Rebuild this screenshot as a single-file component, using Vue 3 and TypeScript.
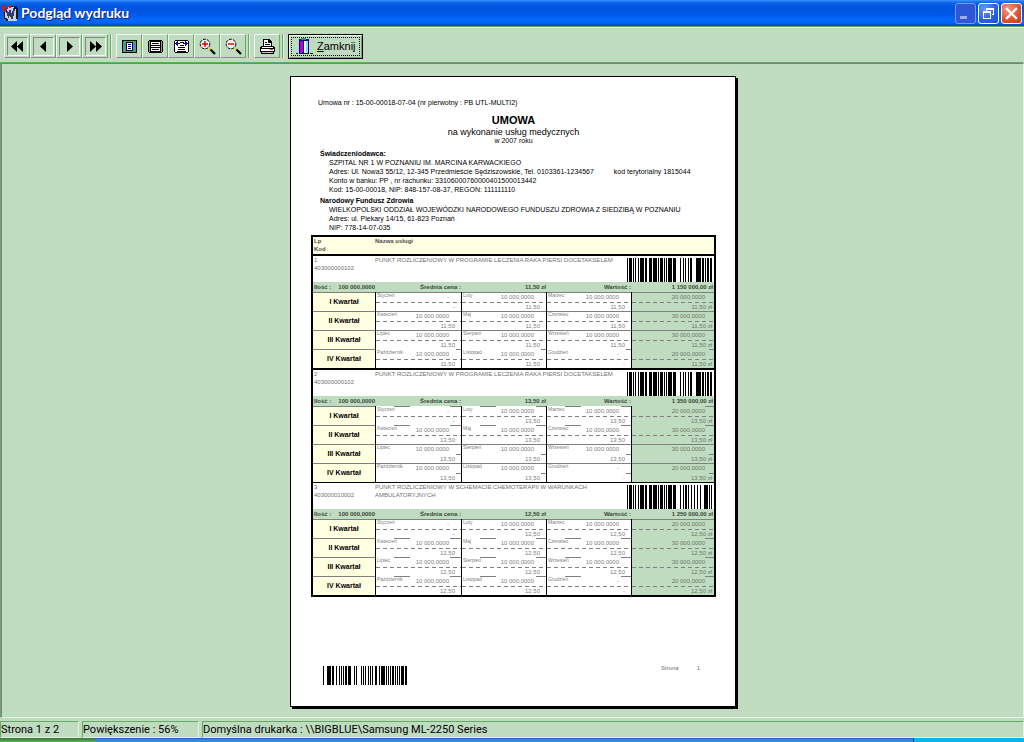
<script setup lang="ts">
type Rule = 'full' | 'part' | 'tail'

interface Month {
  name: string
  qty: string
  price: string
}
interface Quarter {
  label: string
  months: Month[]
  total: string
  rule: Rule
  dash: Rule
}
interface Service {
  no: number
  code: string
  name: string
  price: string
  value: string
  bars: string
  quarters: Quarter[]
}

const labels = ['I Kwartał', 'II Kwartał', 'III Kwartał', 'IV Kwartał']
const monthNames = [
  ['Styczeń', 'Luty', 'Marzec'],
  ['Kwiecień', 'Maj', 'Czerwiec'],
  ['Lipiec', 'Sierpień', 'Wrzesień'],
  ['Październik', 'Listopad', 'Grudzień'],
]
const totals = ['20 000,0000', '30 000,0000', '30 000,0000', '20 000,0000']

function quarters(price: string, rules: Rule[], dashes: Rule[]): Quarter[] {
  return labels.map((label, q) => ({
    label,
    total: totals[q],
    rule: rules[q],
    dash: dashes[q],
    months: monthNames[q].map((name, m) => {
      const empty = (q === 0 && m === 0) || (q === 3 && m === 2)
      return { name, qty: empty ? '-' : '10 000,0000', price: empty ? '-' : price }
    }),
  }))
}

const codeA = '1 1 3 1 1 1 1 2 1 1 4 1 2 2 3 1 4 1 1 1 3 1 1 1 1 1 4 1 3 4 1 2 1 1 1 2 1 1 2 4 5 1 2 1 1 1 2 1 2'
const codeB = '1 1 3 1 1 1 1 2 1 1 4 1 2 2 3 1 4 1 1 1 3 1 1 1 1 1 4 1 3 4 1 2 1 1 2 1 1 2 1 2 1 2 1 2 1 3 4 1 1 1 1'
const codePage = '1 3 4 1 2 2 1 2 1 1 1 1 1 1 2 1 3 3 1 1 1 4 1 1 1 1 1 2 1 1 1 1 1 2 2 2 1 1 4 1 1 1 1 1 1 1 2 1 1 1 1 1 1 1 3 1 2'

const services: Service[] = [
  {
    no: 1,
    code: '403000000102',
    name: 'PUNKT ROZLICZENIOWY W PROGRAMIE LECZENIA RAKA PIERSI DOCETAKSELEM',
    price: '11,50 zł',
    value: '1 150 000,00 zł',
    bars: codeA,
    quarters: quarters('11,50', ['full', 'full', 'full', 'tail'], ['full', 'full', 'full', 'full']),
  },
  {
    no: 2,
    code: '403000000102',
    name: 'PUNKT ROZLICZENIOWY W PROGRAMIE LECZENIA RAKA PIERSI DOCETAKSELEM',
    price: '13,50 zł',
    value: '1 350 000,00 zł',
    bars: codeA,
    quarters: quarters('13,50', ['part', 'part', 'full', 'full'], ['full', 'full', 'tail', 'tail']),
  },
  {
    no: 3,
    code: '403000010002',
    name: 'PUNKT ROZLICZENIOWY W SCHEMACIE CHEMOTERAPII W WARUNKACH AMBULATORYJNYCH',
    price: '12,50 zł',
    value: '1 250 000,00 zł',
    bars: codeB,
    quarters: quarters('12,50', ['full', 'part', 'part', 'part'], ['full', 'full', 'full', 'full']),
  },
]

function bars(code: string): { x: number; w: number }[] {
  const out: { x: number; w: number }[] = []
  let x = 0
  code.split(' ').forEach((run, i) => {
    const w = Number(run)
    if (i % 2 === 0) out.push({ x, w })
    x += w
  })
  return out
}
</script>

<template>
  <div class="window">
    <header class="titlebar">
      <svg class="app-icon" width="16" height="16" viewBox="0 0 16 16" shape-rendering="crispEdges" aria-hidden="true">
        <path d="M3 2h10v2h2v12H5v-2H3z" fill="#c8d0e4" />
        <path d="M0 0h3v2h3v2H4v3H2V5H0zM6 0h3v3H7z" fill="#d01818" />
        <path d="M3 3h2l1 6 1-4h2l1 5 1-7h2l-2 11h-2l-1-5-1 4H6z" fill="#303878" />
        <path d="M12 1h3v2h1v11h-2V4h-2zM2 7h1v6h2v1H2zM9 1h2v1H9zM4 14h2v2H4z" fill="#181818" />
      </svg>
      <h1>Podgląd wydruku</h1>
      <div class="caption-buttons">
        <button type="button" class="cap min" aria-label="Minimalizuj" disabled>
          <svg width="19" height="19" viewBox="0 0 19 19" shape-rendering="crispEdges"><path d="M4 12h7v3H4z" fill="#a0a8ee" /></svg>
        </button>
        <button type="button" class="cap" aria-label="Przywróć">
          <svg width="19" height="19" viewBox="0 0 19 19" shape-rendering="crispEdges" fill="#fff">
            <path d="M7 4h8v2H7zM14 6h1v5h-1zM13 10h1v1h-1zM7 6h1v1H7z" />
            <path d="M4 7h8v2H4zM4 9h1v6H4zM11 9h1v6h-1zM4 14h8v1H4z" />
          </svg>
        </button>
        <button type="button" class="cap close" aria-label="Zamknij okno">
          <svg width="19" height="19" viewBox="0 0 19 19"><path d="M5 5l9 9M14 5l-9 9" stroke="#fff" stroke-width="2.400" stroke-linecap="square" /></svg>
        </button>
      </div>
    </header>

    <div class="toolbar" role="toolbar">
      <div class="group">
        <button type="button" class="tool nav" aria-label="Pierwsza strona">
          <svg width="13" height="11" viewBox="0 0 13 11"><path d="M6 0v11L0 5.500zM12 0v11L6 5.500z" /></svg>
        </button>
        <button type="button" class="tool nav" aria-label="Poprzednia strona">
          <svg width="13" height="11" viewBox="0 0 13 11"><path d="M9 0v11L3 5.500z" /></svg>
        </button>
        <button type="button" class="tool nav" aria-label="Następna strona">
          <svg width="13" height="11" viewBox="0 0 13 11"><path d="M4 0v11l6-5.500z" /></svg>
        </button>
        <button type="button" class="tool nav" aria-label="Ostatnia strona">
          <svg width="13" height="11" viewBox="0 0 13 11"><path d="M1 0v11l6-5.500zM7 0v11l6-5.500z" /></svg>
        </button>
      </div>
      <div class="group">
        <button type="button" class="tool" aria-label="Cała strona">
          <svg width="17" height="17" viewBox="0 0 17 17" shape-rendering="crispEdges">
            <rect x="1" y="2" width="15" height="13" rx="1" fill="#000" /><rect x="2" y="3" width="13" height="11" fill="#3aa0a0" />
            <path d="M5 4h7v9H5z" fill="#000" /><path d="M6 5h5v7H6z" fill="#fff" />
            <path d="M7 6h3v1H7zM7 8h3v1H7zM7 10h3v1H7z" fill="#0000a0" />
          </svg>
        </button>
        <button type="button" class="tool" aria-label="Szerokość strony">
          <svg width="17" height="17" viewBox="0 0 17 17" shape-rendering="crispEdges">
            <path d="M2 2h13v1h1v11h-1v1H2v-1H1V3h1z" fill="#000" /><path d="M2 3h13v11H2z" fill="#909890" /><path d="M3 3h11v11H3z" fill="#000" /><path d="M4 4h9v9H4z" fill="#fff" />
            <path d="M5 5h7v1H5zM4 7h9v1H4zM4 9h9v1H4zM5 11h7v1H5z" fill="#000" />
          </svg>
        </button>
        <button type="button" class="tool" aria-label="Dopasuj szerokość">
          <svg width="17" height="17" viewBox="0 0 17 17" shape-rendering="crispEdges">
            <path d="M2 2h13v1h1v11h-1v1H2v-1H1V3h1z" fill="#000" /><path d="M2 3h13v11H2z" fill="#fff" />
            <path d="M7 4h4v1H7zM7 7h4v1H7zM5 9h7v1H5zM5 11h7v1H5zM4 13h9v1H4z" fill="#000" />
            <path d="M2 5h1V4h1V3h1v2h2v1H5v2H4V7H3V6H2zM15 5h-1V4h-1V3h-1v2h-2v1h2v2h1V7h1V6h1z" fill="#0000c0" />
          </svg>
        </button>
        <button type="button" class="tool" aria-label="Powiększ">
          <svg width="17" height="17" viewBox="0 0 17 17">
            <circle cx="6" cy="6" r="4.800" fill="#eef2ee" stroke="#000" stroke-dasharray="3 1" />
            <path d="M10 10l1.500 1.500" stroke="#e0d020" stroke-width="2" /><path d="M11.500 11.500L16 16" stroke="#000" stroke-width="2.200" />
            <path d="M3 5.300h6v1.400H3zM5.300 3h1.400v6H5.300z" fill="#e00000" />
          </svg>
        </button>
        <button type="button" class="tool" aria-label="Pomniejsz">
          <svg width="17" height="17" viewBox="0 0 17 17">
            <circle cx="6" cy="6" r="4.800" fill="#eef2ee" stroke="#000" stroke-dasharray="3 1" />
            <path d="M10 10l1.500 1.500" stroke="#e0d020" stroke-width="2" /><path d="M11.500 11.500L16 16" stroke="#000" stroke-width="2.200" />
            <path d="M3 5.300h6v1.400H3z" fill="#e00000" />
          </svg>
        </button>
      </div>
      <div class="group">
        <button type="button" class="tool" aria-label="Drukuj">
          <svg width="17" height="17" viewBox="0 0 17 17" shape-rendering="crispEdges">
            <path d="M4 1h6l3 3v5H4z" fill="#000" /><path d="M5 2h4v3h3v4H5z" fill="#fff" />
            <path d="M6 4h2v1H6zM6 6h5v1H6zM9 2h1v2h2v1H9z" fill="#000" />
            <path d="M2 8h13v1h1v5h-1v2H2v-2H1V9h1z" fill="#000" />
            <path d="M3 9h11v1H3zM2 11h13v2H2z" fill="#fff" /><path d="M3 14h11v1H3z" fill="#c8c8c8" /><path d="M11 11h3v1h-3z" fill="#c04040" />
          </svg>
        </button>
      </div>
      <button type="button" class="exit">
        <svg width="17" height="17" viewBox="0 0 17 17" shape-rendering="crispEdges" aria-hidden="true">
          <path d="M3 1h10v15H3z" fill="#000080" /><path d="M5 0h5v2H5z" fill="#20a040" />
          <path d="M4 3h3v11l-2 1H4z" fill="#c000c0" /><path d="M8 3h4v12H8z" fill="#70e8f0" /><path d="M8 3h2v12H8z" fill="#e8ffff" />
          <path d="M0 15h2v1H0zM7 15h4v1H7zM14 15h3v1h-3z" fill="#0000c0" />
        </svg>
        <span><u>Z</u>amknij</span>
      </button>
    </div>

    <main class="viewport">
      <article class="paper">
        <p class="contract">Umowa nr : 15-00-00018-07-04 (nr pierwotny : PB UTL-MULTI2)</p>
        <h2>UMOWA</h2>
        <p class="subtitle">na wykonanie usług medycznych</p>
        <p class="year">w 2007 roku</p>

        <section class="party">
          <h3>Świadczeniodawca:</h3>
          <p>SZPITAL NR 1 W POZNANIU IM. MARCINA KARWACKIEGO</p>
          <p class="address">
            <span>Adres: Ul. Nowa3 55/12, 12-345 Przedmieście Sędziszowskie, Tel. 0103361-1234567</span>
            <span>kod terytorialny 1815044</span>
          </p>
          <p>Konto w banku: PP , nr rachunku: 33106000760000401500013442</p>
          <p>Kod: 15-00-00018, NIP: 848-157-08-37, REGON: 111111110</p>
        </section>
        <section class="party">
          <h3>Narodowy Fundusz Zdrowia</h3>
          <p>WIELKOPOLSKI ODDZIAŁ WOJEWÓDZKI NARODOWEGO FUNDUSZU ZDROWIA Z SIEDZIBĄ W POZNANIU</p>
          <p>Adres: ul. Piekary 14/15, 61-823 Poznań</p>
          <p>NIP: 778-14-07-035</p>
        </section>

        <table class="services">
          <colgroup>
            <col class="c-quarter" /><col class="c-first" /><col class="c-month" /><col class="c-month" /><col />
          </colgroup>
          <thead>
            <tr>
              <th>Lp<br />Kod</th>
              <th colspan="4">Nazwa usługi</th>
            </tr>
          </thead>
          <tbody v-for="s in services" :key="s.no">
            <tr class="lead">
              <td>{{ s.no }}<br />{{ s.code }}</td>
              <td colspan="3"><div class="service-name">{{ s.name }}</div></td>
              <td class="code-cell">
                <svg width="85" height="24" viewBox="0 0 85 24" shape-rendering="crispEdges" aria-hidden="true">
                  <rect v-for="b in bars(s.bars)" :key="b.x" :x="b.x" y="0" :width="b.w" height="24" />
                </svg>
              </td>
            </tr>
            <tr class="sum">
              <td><div class="amount"><span>Ilość :</span><span>100 000,0000</span></div></td>
              <td>Średnia cena :</td>
              <td>{{ s.price }}</td>
              <td>Wartość :</td>
              <td>{{ s.value }}</td>
            </tr>
            <tr v-for="q in s.quarters" :key="q.label" class="quarter">
              <th scope="row">{{ q.label }}</th>
              <td v-for="m in q.months" :key="m.name">
                <div class="upper" :class="'rule-' + q.rule"><span class="month">{{ m.name }}</span><span>{{ m.qty }}</span></div>
                <div class="lower" :class="'dash-' + q.dash">{{ m.price }}</div>
              </td>
              <td class="total">
                <div class="upper" :class="'rule-' + q.rule"><span>{{ q.total }}</span></div>
                <div class="lower" :class="'dash-' + q.dash">{{ s.price }}</div>
              </td>
            </tr>
          </tbody>
        </table>

        <footer class="page-foot">
          <svg width="84" height="19" viewBox="0 0 84 19" shape-rendering="crispEdges" aria-hidden="true">
            <rect v-for="b in bars(codePage)" :key="b.x" :x="b.x" y="0" :width="b.w" height="19" />
          </svg>
          <p><span>Strona</span><span>1</span></p>
        </footer>
      </article>
    </main>

    <footer class="statusbar">
      <div class="pane pages">Strona 1 z 2</div>
      <div class="pane scale">Powiększenie : 56%</div>
      <div class="pane printer">Domyślna drukarka : \\BIGBLUE\Samsung ML-2250 Series</div>
    </footer>
    <div class="taskbar"><div class="start"></div><div class="tray"></div></div>
  </div>
</template>

<style>
body {
  margin: 0;
  background: #c0dcc0;
}
</style>

<style scoped>
.window {
  display: flex;
  flex-direction: column;
  min-height: 100vh;
  background: #c0dcc0;
  color: #000;
  font-family: Roboto, "Liberation Sans", sans-serif;
  font-size: 11px;
}
h1, h2, h3, p { margin: 0; font-weight: normal; }
button { padding: 0; font: inherit; color: inherit; }

.titlebar {
  display: flex;
  align-items: center;
  box-sizing: border-box;
  height: 26px;
  padding: 0 2px;
  background: linear-gradient(#3a93ff 0, #0a62e8 3px, #0054e0 7px, #0058e8 14px, #0368fc 20px, #0264f6 23px, #0040b8 26px);
}
.app-icon { flex: none; }
h1 {
  flex: 1;
  padding-left: 3px;
  font: bold 14px/20px Lato, "Open Sans", sans-serif;
  color: #fff;
  text-shadow: 1px 1px 0 #0a1e80;
}
.caption-buttons { display: flex; gap: 2px; }
.cap {
  display: flex;
  align-items: center;
  justify-content: center;
  box-sizing: border-box;
  width: 21px;
  height: 21px;
  border: 1px solid #fff;
  border-radius: 3px;
  background: radial-gradient(circle at 30% 25%, #6c96f4, #2a5fdc 60%, #1c4ed0);
}
.cap.min { border-color: #7c98ec; background: #2c58d8; }
.cap.close { background: radial-gradient(circle at 30% 25%, #f0987c, #e0502c 60%, #c83a10); }

.toolbar {
  display: flex;
  align-items: center;
  gap: 4px;
  box-sizing: border-box;
  height: 36px;
  padding: 3px 4px 0;
  border-top: 1px solid #64ac64;
  box-shadow: inset 0 1px 0 #e4f0e4;
}
.group {
  display: flex;
  padding-right: 3px;
  border-right: 1px solid #e4f0e4;
  box-shadow: inset -1px 0 0 #64ac64;
}
.tool {
  display: flex;
  align-items: center;
  justify-content: center;
  box-sizing: border-box;
  width: 26px;
  height: 24px;
  border: 1px solid;
  border-color: #eef6ee #64ac64 #64ac64 #eef6ee;
  background: #c0dcc0;
}
.nav svg {
  padding: 3px;
  border: 1px solid;
  border-color: #808880 #f4faf4 #f4faf4 #808880;
}
.exit {
  display: flex;
  align-items: center;
  gap: 4px;
  box-sizing: border-box;
  height: 25px;
  padding: 0 6px 0 7px;
  border: 1px solid #000;
  background: #c0dcc0;
  box-shadow: inset 1px 1px 0 #eef6ee, inset -1px -1px 0 #64ac64;
  outline: 1px dotted #000;
  outline-offset: -4px;
  font: 11px/14px "Liberation Sans", Arial, sans-serif;
}

.viewport {
  flex: 1;
  padding: 12px 12px 8px 13px;
  border-top: 1px solid #808080;
  border-left: 1px solid #808080;
  border-right: 1px solid #e4f0e4;
  border-bottom: 1px solid #e4f0e4;
  margin-left: 1px;
  box-shadow: -1px -1px 0 #64ac64;
  margin-top: 1px;
}
.paper {
  display: flex;
  flex-direction: column;
  box-sizing: border-box;
  width: 446px;
  max-width: 100%;
  min-height: 631px;
  margin: 0 auto;
  padding: 21px 19px 21px 20px;
  border: 1px solid #000;
  background: #fff;
  box-shadow: 2px 2px 0 #000;
  font: 7px/9px "Liberation Sans", Arial, sans-serif;
}
.contract { padding-left: 7px; }
h2 { margin-top: 7px; font-size: 11px; font-weight: bold; line-height: 13px; text-align: center; }
.subtitle { font-size: 9px; line-height: 10px; text-align: center; }
.year { line-height: 8px; text-align: center; }
.party { padding-left: 18px; }
.party h3 { margin-left: -9px; font-size: 7px; font-weight: bold; }
.year + .party { margin-top: 4px; }
.party + .party { margin-top: 2px; }
.address { display: flex; gap: 20px; }

.services {
  width: 100%;
  margin-top: 3px;
  table-layout: fixed;
  border: 2px solid #000;
  border-spacing: 0;
  font-size: 6px;
  line-height: 8px;
  color: #707070;
}
.services th, .services td { padding: 0; vertical-align: top; }
.c-quarter { width: 62px; }
.c-first { width: 86px; }
.c-month { width: 85px; }
thead th {
  height: 17px;
  background: #ffffe1;
  border-bottom: 2px solid #000;
  text-align: left;
  color: #505050;
}
thead th:first-child, .lead td:first-child { padding-left: 1px; }
.lead td { height: 26px; }
.service-name { width: 246px; }
.code-cell svg { display: block; margin: 2px 0 0 -4px; overflow: visible; }
.sum td {
  height: 10px;
  line-height: 10px;
  background: #c0dcc0;
  font-weight: bold;
  text-align: right;
  color: #384838;
}
.sum td:last-child { padding-right: 1px; }
.amount { display: flex; justify-content: space-between; padding-left: 1px; }
.quarter th {
  vertical-align: middle;
  border-top: 1px solid #808080;
  background: #ffffe1;
  font-size: 7px;
  color: #000;
}
.quarter td { border-left: 1px solid #000; color: #808080; }
.upper {
  display: flex;
  justify-content: space-between;
  height: 10px;
  padding-right: 12px;
  line-height: 10px;
  background-repeat: no-repeat;
  background-size: 100% 1px;
}
.month { padding: 0 1px; font-size: 5px; line-height: 7px; }
.lower {
  height: 9px;
  padding-right: 6px;
  line-height: 10px;
  text-align: right;
  background-repeat: no-repeat;
  background-size: 100% 1px;
}
.rule-full { background-image: linear-gradient(#808080, #808080); }
.rule-part { background-image: linear-gradient(to right, transparent 18px, #808080 18px, #808080 34px, transparent 34px, transparent 74px, #808080 74px); }
.rule-tail, .dash-tail { background-image: linear-gradient(to left, #808080 5px, transparent 5px); }
.dash-full { background-image: repeating-linear-gradient(to right, #808080 0, #808080 4px, transparent 4px, transparent 7px); }
.quarter .total { background: #c0dcc0; color: #687868; }
.total .upper { justify-content: flex-end; padding-right: 9px; }
.total .rule-part { background-image: linear-gradient(to left, #808080 9px, transparent 9px); }
.total .lower { padding-right: 2px; }
tbody:nth-of-type(1) .quarter:last-child > *, tbody:nth-of-type(2) .quarter:last-child > * { border-bottom: 1px solid #000; }
tbody:nth-of-type(1) .quarter:last-child > * { border-bottom-width: 2px; }

.page-foot {
  display: flex;
  align-items: flex-start;
  justify-content: space-between;
  margin-top: auto;
  padding: 0 16px 0 12px;
  font-size: 6px;
  line-height: 5px;
  color: #707070;
}
.page-foot p { display: flex; gap: 18px; }

.statusbar {
  display: flex;
  gap: 3px;
  padding-top: 3px;
}
.pane {
  box-sizing: border-box;
  height: 17px;
  border: 1px solid;
  border-color: #64ac64 #e4f0e4 #e4f0e4 #64ac64;
  line-height: 16px;
  white-space: nowrap;
}
.pages { width: 79px; }
.scale { width: 117px; }
.printer { flex: 1; }
.taskbar {
  display: flex;
  justify-content: space-between;
  height: 4px;
  background: linear-gradient(#2458c8, #3c8cf0 2px, #3a80e4);
}
.start { width: 96px; background: linear-gradient(#387838, #5cb05c); border-radius: 0 4px 0 0; }
.tray { width: 110px; background: #14b0f0; border-left: 1px solid #083880; }
</style>
